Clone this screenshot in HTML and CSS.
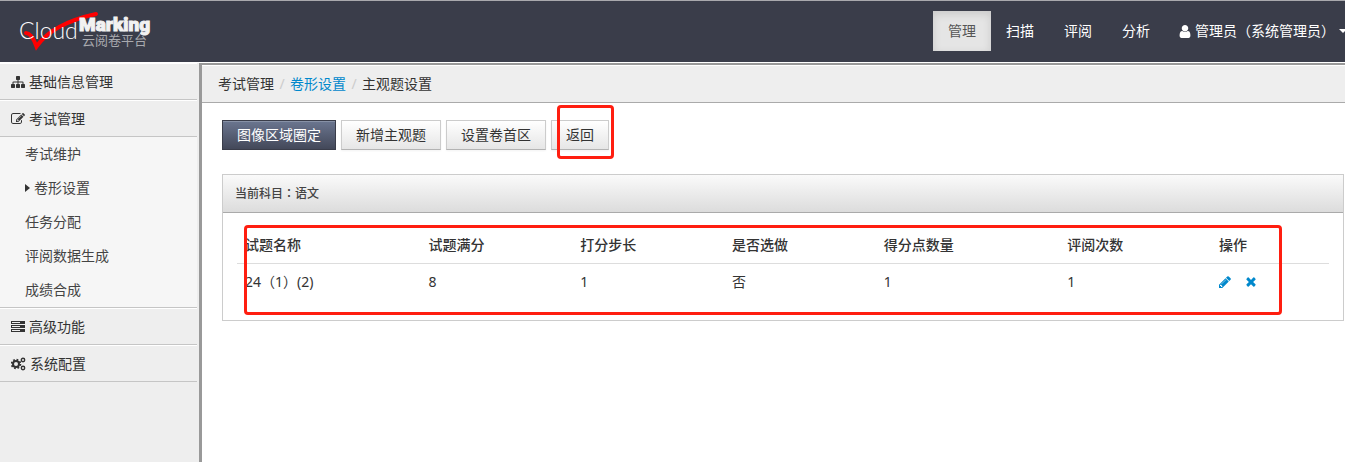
FILE: index.html
```html
<!DOCTYPE html>
<html lang="zh-CN">
<head>
<meta charset="utf-8">
<title>云阅卷平台</title>
<link rel="stylesheet" href="styles.css">
</head>
<body>
<header class="topbar">
  <a class="brand" href="#" aria-label="Cloud Marking 云阅卷平台">
    <svg class="logo" width="140" height="44" viewBox="0 0 140 44">
      <path class="logo-tick" d="M7 22C10 22 14 26 17.500 35.500C27 22 45 10 77 3" />
      <text class="logo-cloud" x="0" y="28">Cloud</text>
      <text class="logo-marking" x="60" y="20">Marking</text>
      <text class="logo-cn" x="63" y="34">云阅卷平台</text>
    </svg>
  </a>
  <nav class="nav">
    <a class="nav-link active" href="#">管理</a>
    <a class="nav-link" href="#">扫描</a>
    <a class="nav-link" href="#">评阅</a>
    <a class="nav-link" href="#">分析</a>
    <a class="nav-link user" href="#">
      <svg class="icon-user" viewBox="256 128 1280 1536"><path d="M1536 1399q0 109-62.500 187t-150.500 78h-854q-88 0-150.500-78t-62.500-187q0-85 8.500-160.500t31.500-152 58.500-131 94-89 134.500-34.500q131 128 313 128t313-128q76 0 134.500 34.500t94 89 58.500 131 31.500 152 8.500 160.500zm-256-887q0 159-112.500 271.500t-271.500 112.500-271.500-112.500-112.500-271.500 112.500-271.500 271.500-112.500 271.500 112.500 112.500 271.500z"/></svg>
      <span>管理员（系统管理员）</span>
      <span class="caret"></span>
    </a>
  </nav>
</header>
<div class="layout">
  <aside class="sidebar">
    <ul class="menu">
      <li><a class="menu-link" href="#">
        <svg class="icon" viewBox="0 0 1792 1792"><path d="M1792 1248v320q0 40-28 68t-68 28h-320q-40 0-68-28t-28-68v-320q0-40 28-68t68-28h96v-192h-512v192h96q40 0 68 28t28 68v320q0 40-28 68t-68 28h-320q-40 0-68-28t-28-68v-320q0-40 28-68t68-28h96v-192h-512v192h96q40 0 68 28t28 68v320q0 40-28 68t-68 28h-320q-40 0-68-28t-28-68v-320q0-40 28-68t68-28h96v-192q0-52 38-90t90-38h512v-192h-96q-40 0-68-28t-28-68v-320q0-40 28-68t68-28h320q40 0 68 28t28 68v320q0 40-28 68t-68 28h-96v192h512q52 0 90 38t38 90v192h96q40 0 68 28t28 68z"/></svg>基础信息管理</a></li>
      <li><a class="menu-link" href="#">
        <svg class="icon" viewBox="0 0 1792 1792"><path d="M888 1184l116-116-152-152-116 116v56h96v96h56zm440-720q-16-16-33 1l-350 350q-17 17-1 33t33-1l350-350q17-17 1-33zm80 594v190q0 119-84.500 203.500t-203.500 84.500h-832q-119 0-203.500-84.500t-84.500-203.500v-832q0-119 84.500-203.500t203.500-84.500h832q63 0 117 25 15 7 18 23 3 17-9 29l-49 49q-14 14-32 8-23-6-45-6h-832q-66 0-113 47t-47 113v832q0 66 47 113t113 47h832q66 0 113-47t47-113v-126q0-13 9-22l64-64q15-15 35-7t20 29zm-96-738l288 288-672 672h-288v-288zm444 132l-92 92-288-288 92-92q28-28 68-28t68 28l152 152q28 28 28 68t-28 68z"/></svg>考试管理</a>
        <ul class="submenu">
          <li><a class="submenu-link" href="#">考试维护</a></li>
          <li><a class="submenu-link current" href="#">卷形设置</a></li>
          <li><a class="submenu-link" href="#">任务分配</a></li>
          <li><a class="submenu-link" href="#">评阅数据生成</a></li>
          <li><a class="submenu-link" href="#">成绩合成</a></li>
        </ul>
      </li>
      <li><a class="menu-link" href="#">
        <svg class="icon" viewBox="0 0 14 14"><path fill-rule="evenodd" d="M0 1h14v3H0zM1 2v1h8V2zM0 5h14v3H0zM1 6v1h8V6zM0 9h14v3H0zM1 10v1h8v-1z"/></svg>高级功能</a></li>
      <li><a class="menu-link" href="#">
        <svg class="icon icon-cogs" viewBox="0 0 15 14"><circle class="cog" cx="5" cy="7" r="3"/><circle class="cog-teeth" cx="5" cy="7" r="4.300"/><circle class="cog-small" cx="12" cy="3" r="1.700"/><circle class="cog-small" cx="12" cy="11" r="1.700"/></svg>系统配置</a></li>
    </ul>
  </aside>
  <main class="main">
    <nav class="breadcrumb">
      <a href="#">考试管理</a><span class="slash">/</span><a class="blue" href="#">卷形设置</a><span class="slash">/</span><span>主观题设置</span>
    </nav>
    <div class="content">
      <div class="toolbar">
        <button class="btn primary" type="button">图像区域圈定</button>
        <button class="btn" type="button">新增主观题</button>
        <button class="btn" type="button">设置卷首区</button>
        <span class="marked"><button class="btn" type="button">返回</button></span>
      </div>
      <section class="panel">
        <h2 class="panel-title">当前科目<span class="colon" lang="zh-TW">：</span>语文</h2>
        <div class="panel-body">
          <table class="table">
            <thead>
              <tr><th class="col-name">试题名称</th><th class="col-mid">试题满分</th><th class="col-mid">打分步长</th><th class="col-mid">是否选做</th><th class="col-points">得分点数量</th><th class="col-mid">评阅次数</th><th>操作</th></tr>
            </thead>
            <tbody>
              <tr><td>24（1）(2)</td><td>8</td><td>1</td><td>否</td><td>1</td><td>1</td>
                <td><div class="actions">
                  <a href="#" aria-label="编辑"><svg class="action-icon" viewBox="128 128 1536 1536"><path d="M491 1536l91-91-235-235-91 91v107h128v128h107zm523-928q0-22-22-22-10 0-17 7l-542 542q-7 7-7 17 0 22 22 22 10 0 17-7l542-542q7-7 7-17zm-54-192l416 416-832 832h-416v-416zm683 96q0 53-37 90l-166 166-416-416 166-165q36-38 90-38 53 0 91 38l235 234q37 39 37 91z"/></svg></a>
                  <a href="#" aria-label="删除"><svg class="action-icon" viewBox="128 192 1536 1536"><path d="M1490 1322q0 40-28 68l-136 136q-28 28-68 28t-68-28l-294-294-294 294q-28 28-68 28t-68-28l-136-136q-28-28-28-68t28-68l294-294-294-294q-28-28-28-68t28-68l136-136q28-28 68-28t68 28l294 294 294-294q28-28 68-28t68 28l136 136q28 28 28 68t-28 68l-294 294 294 294q28 28 28 68z"/></svg></a>
                </div></td></tr>
            </tbody>
          </table>
        </div>
      </section>
    </div>
  </main>
</div>
</body>
</html>
```
FILE: styles.css
```css
* { box-sizing: border-box; }
body {
  margin: 0;
  min-height: 100vh;
  display: flex;
  flex-direction: column;
  overflow-x: hidden;
  background: #fff;
  color: #333;
  font: 14px/20px "Noto Sans", "Noto Sans CJK SC", sans-serif;
}
a { color: inherit; text-decoration: none; }
ul { list-style: none; margin: 0; padding: 0; }

.topbar {
  display: flex;
  justify-content: space-between;
  align-items: flex-start;
  height: 62px;
  padding: 10px 0 0 19px;
  overflow: hidden;
  border-top: 1px solid #a9a9ad;
  background: #3a3d4a;
}
.brand { display: block; height: 44px; }
.logo { display: block; }
.logo-tick { fill: none; stroke: #f00; stroke-width: 4; stroke-linecap: round; }
.logo-cloud { fill: #fff; font: 300 23px Lato, sans-serif; }
.logo-marking { fill: #f2f2f2; stroke: #f2f2f2; stroke-width: 1; font: 900 19px Roboto, sans-serif; }
.logo-cn { fill: #a9aaaf; font: 13px "Noto Sans CJK SC", sans-serif; }
.nav { display: flex; margin-right: -17px; }
.nav-link {
  display: flex;
  align-items: center;
  height: 40px;
  padding: 0 15px;
  color: #fff;
  white-space: nowrap;
}
.nav-link.active {
  background: #e5e5e5;
  color: #555;
  box-shadow: inset 0 3px 8px rgba(0, 0, 0, .125);
}
.nav-link.user { padding-left: 14px; }
.icon-user { width: 12px; height: 13px; margin-right: 4px; fill: #fff; }
.caret {
  margin-left: 4px;
  border: 4px solid transparent;
  border-top-color: #fff;
  border-bottom: 0;
}

.layout { flex: 1; display: flex; border-top: 1px solid #fff; }
.sidebar {
  width: 202px;
  flex: none;
  padding-right: 2px;
  border-right: 3px solid #999;
  background: #eee;
}
.menu-link {
  display: flex;
  align-items: center;
  height: 37px;
  padding-left: 11px;
  border-top: 1px solid #fff;
  border-bottom: 1px solid #c5c5c5;
}
.icon { width: 14px; height: 14px; margin-right: 4px; fill: #333; }
.icon-cogs { width: 15px; }
.cog { fill: none; stroke: #333; stroke-width: 2; }
.cog-teeth { fill: none; stroke: #333; stroke-width: 2; stroke-dasharray: 1.700 1.677; }
.cog-small { fill: none; stroke: #333; stroke-width: 1.400; }
.submenu { background: #f6f6f6; border-bottom: 1px solid #c5c5c5; }
.submenu-link {
  display: flex;
  align-items: center;
  height: 34px;
  padding-left: 25px;
  color: #444;
}
.submenu-link.current::before {
  content: "";
  margin-right: 4px;
  border: 4px solid transparent;
  border-left: 5px solid #333;
  border-right: 0;
}

.main { flex: 1; min-width: 0; border-top: 2px solid #999; }
.breadcrumb {
  display: flex;
  align-items: center;
  height: 38px;
  padding: 0 16px;
  border-top: 1px solid #fff;
  border-bottom: 1px solid #aaa;
  background: #eee;
}
.blue { color: #08c; }
.slash { width: 16px; text-align: center; color: #ccc; }
.content { padding: 17px 1px 20px 20px; }
.toolbar { display: flex; gap: 5px; margin-bottom: 24px; }
.btn {
  display: block;
  height: 30px;
  padding: 0 14px;
  border: 1px solid #ccc;
  border-bottom-color: #b3b3b3;
  background: linear-gradient(#fff, #e6e6e6);
  box-shadow: 0 1px 2px rgba(0, 0, 0, .05);
  color: #333;
  font: inherit;
}
.btn.primary {
  border-color: #3a3d4a;
  background: linear-gradient(#6b7690, #434859);
  box-shadow: inset 0 1px 0 #8791a6;
  color: #fff;
}
.marked { position: relative; }
.marked::after,
.panel-body::after {
  content: "";
  position: absolute;
  border: 3px solid #ff1e10;
  border-radius: 4px;
  pointer-events: none;
}
.marked::after { inset: -15px -5px -9px 6px; }

.panel { border: 1px solid #ccc; }
.panel-title {
  margin: 0;
  padding: 9px 12px 8px;
  border-bottom: 1px solid #aaa;
  background: linear-gradient(#fafafa, #dcdcdc);
  color: #444;
  font-size: 12px;
  font-weight: 500;
  line-height: 20px;
}
.colon { font-family: "Noto Sans CJK TC", sans-serif; line-height: 1; }
.panel-body { position: relative; padding: 14px 14px 20px; }
.panel-body::after { inset: 12px 61px 5px 21px; }
.table { width: 100%; table-layout: fixed; border-collapse: collapse; }
.table th,
.table td { padding: 8px; text-align: left; vertical-align: middle; line-height: 20px; }
.table th { font-weight: 500; border-bottom: 1px solid #ddd; }
.col-name { width: 16.8%; }
.col-mid { width: 13.9%; }
.col-points { width: 16.8%; }
.actions { display: flex; align-items: center; gap: 14px; height: 20px; }
.action-icon { display: block; width: 12px; height: 12px; fill: #08c; }
```
